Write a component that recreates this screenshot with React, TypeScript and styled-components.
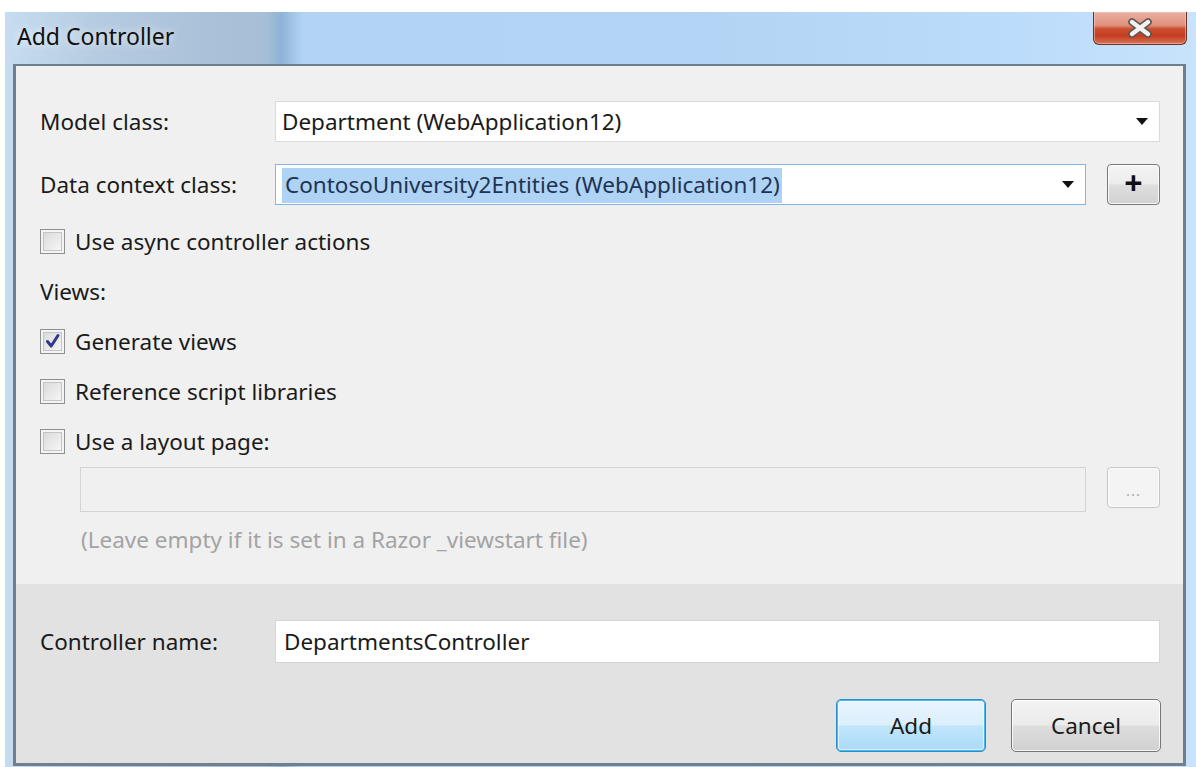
import React from 'react'
import styled, { createGlobalStyle } from 'styled-components'

const GlobalStyle = createGlobalStyle`
  html, body {
    margin: 0;
    padding: 0;
    background: #ffffff;
  }
  body {
    font-family: "Noto Sans", "Open Sans", sans-serif;
  }
`

const CheckMark = () => (
  <svg width="16" height="16" viewBox="0 0 16 16">
    <path d="M2.5 8.5 L6.2 13 L13 2.5" fill="none" stroke="#2e3a8c" strokeWidth="3" strokeLinecap="round" strokeLinejoin="round" />
  </svg>
)

const Arrow = () => (
  <svg width="12" height="7" viewBox="0 0 12 7">
    <path d="M0 0 H12 L6 7 Z" fill="#111" />
  </svg>
)

const CloseGlyph = () => (
  <svg width="28" height="20" viewBox="0 0 28 20">
    <path d="M6 4 L22 16 M22 4 L6 16" stroke="#5d5654" strokeWidth="7.5" strokeLinecap="round" />
    <path d="M6 4 L22 16 M22 4 L6 16" stroke="#f2f2f2" strokeWidth="4.4" strokeLinecap="round" />
  </svg>
)

const Checkbox = ({ checked }: { checked?: boolean }) => (
  <Box>{checked && <CheckMark />}</Box>
)

const App = () => {
  return (
    <Page>
      <GlobalStyle />
      <Window>
        <TitleBar>
          <Title>Add Controller</Title>
          <CloseButton>
            <CloseGlyph />
          </CloseButton>
        </TitleBar>
        <Client>
          <Main>
            <FieldRow>
              <Label>Model class:</Label>
              <Combo>
                <ComboText>Department (WebApplication12)</ComboText>
                <Arrow />
              </Combo>
            </FieldRow>
            <FieldRow $gap={22}>
              <Label>Data context class:</Label>
              <Combo $focused>
                <ComboText>
                  <Selected>ContosoUniversity2Entities (WebApplication12)</Selected>
                </ComboText>
                <Arrow />
              </Combo>
              <SideButton>
                <Plus>+</Plus>
              </SideButton>
            </FieldRow>
            <CheckRow $gap={23}>
              <Checkbox />
              <CheckLabel>Use async controller actions</CheckLabel>
            </CheckRow>
            <SectionLabel>Views:</SectionLabel>
            <CheckRow>
              <Checkbox checked />
              <CheckLabel>Generate views</CheckLabel>
            </CheckRow>
            <CheckRow>
              <Checkbox />
              <CheckLabel>Reference script libraries</CheckLabel>
            </CheckRow>
            <CheckRow>
              <Checkbox />
              <CheckLabel>Use a layout page:</CheckLabel>
            </CheckRow>
            <LayoutRow>
              <DisabledField />
              <SideButton disabled>
                <Dots>...</Dots>
              </SideButton>
            </LayoutRow>
            <Hint>(Leave empty if it is set in a Razor _viewstart file)</Hint>
          </Main>
          <Footer>
            <FieldRow $gap={0}>
              <Label>Controller name:</Label>
              <NameInput>DepartmentsController</NameInput>
            </FieldRow>
            <Buttons>
              <Button $primary>Add</Button>
              <Button>Cancel</Button>
            </Buttons>
          </Footer>
        </Client>
      </Window>
    </Page>
  )
}

export default App

const Page = styled.div`
  width: 1196px;
  height: 767px;
  overflow: hidden;
  padding-top: 12px;
  box-sizing: border-box;
  background: #ffffff;
`

const Window = styled.div`
  margin-left: 5px;
  width: 1191px;
  height: 755px;
  box-sizing: border-box;
  padding: 0 10px 1px 8px;
  display: flex;
  flex-direction: column;
  background: linear-gradient(
    90deg,
    #c6dcf1 0%,
    #b5cbe0 8%,
    #a9c0d8 18%,
    #a6bed6 22%,
    #8eb3d8 23.2%,
    #b2d3f4 25%,
    #b3d4f4 60%,
    #bcdcfb 85%,
    #c8e3fb 100%
  );
`

const TitleBar = styled.div`
  height: 52px;
  flex-shrink: 0;
  display: flex;
  justify-content: space-between;
  align-items: flex-start;
`

const Title = styled.div`
  margin-top: 8px;
  margin-left: 4px;
  font-size: 23px;
  color: #101010;
  text-shadow: 0 0 8px rgba(255, 255, 255, 0.9);
`

const CloseButton = styled.div`
  width: 94px;
  height: 33px;
  margin-right: -1px;
  box-sizing: border-box;
  border: 1px solid #6a3328;
  border-top: none;
  border-radius: 0 0 6px 6px;
  display: flex;
  align-items: center;
  justify-content: center;
  background: linear-gradient(180deg, #eab0a2 0%, #e0907b 42%, #cd4f31 52%, #c43d20 75%, #d9745a 100%);
  box-shadow: inset 0 0 0 1px rgba(255, 210, 200, 0.5);
`

const Client = styled.div`
  flex: 1;
  display: flex;
  flex-direction: column;
  border: 3px solid #6e7f90;
  border-top-width: 2px;
  background: #f0f0f0;
`

const Main = styled.div`
  height: 518px;
  flex-shrink: 0;
  box-sizing: border-box;
  padding: 35px 23px 0 24px;
  display: flex;
  flex-direction: column;
`

const FieldRow = styled.div<{ $gap?: number }>`
  display: flex;
  align-items: center;
  margin-top: ${p => p.$gap ?? 0}px;
`

const Label = styled.div`
  width: 235px;
  flex-shrink: 0;
  font-size: 22.5px;
  color: #1a1a1a;
`

const Combo = styled.div<{ $focused?: boolean }>`
  flex: 1;
  height: 41px;
  box-sizing: border-box;
  display: flex;
  align-items: center;
  padding: 0 11px 0 6px;
  background: #ffffff;
  border: 1px solid ${p => (p.$focused ? '#86b7e4' : '#dadada')};
`

const ComboText = styled.div`
  flex: 1;
  font-size: 22.5px;
  color: #1a1a1a;
  white-space: nowrap;
`

const Selected = styled.span`
  background: #aed3f5;
  color: #1f3452;
  padding: 1px 2px 3px 3px;
`

const SideButton = styled.div<{ disabled?: boolean }>`
  width: 53px;
  height: 41px;
  margin-left: 21px;
  flex-shrink: 0;
  box-sizing: border-box;
  border-radius: 4px;
  display: flex;
  align-items: center;
  justify-content: center;
  border: 1px solid ${p => (p.disabled ? '#c6c6c6' : '#7a7a7a')};
  background: ${p =>
    p.disabled
      ? '#f4f4f4'
      : 'linear-gradient(180deg, #f4f4f4 0%, #ececec 48%, #dedede 52%, #d2d2d2 100%)'};
  box-shadow: inset 0 0 0 1px rgba(255, 255, 255, 0.8);
`

const Plus = styled.span`
  font-size: 32px;
  font-weight: 700;
  line-height: 1;
  color: #111;
  margin-top: -3px;
`

const Dots = styled.span`
  font-size: 15px;
  color: #a8a8b8;
  margin-top: 4px;
  letter-spacing: 1px;
`

const CheckRow = styled.div<{ $gap?: number }>`
  display: flex;
  align-items: center;
  height: 26px;
  margin-top: ${p => p.$gap ?? 24}px;
`

const Box = styled.div`
  width: 25px;
  height: 25px;
  box-sizing: border-box;
  border: 1px solid #8e8f8f;
  display: flex;
  align-items: center;
  justify-content: center;
  background: linear-gradient(135deg, #d6d6d6 0%, #e8e8e8 50%, #fafafa 100%);
  box-shadow: inset 0 0 0 2px #f4f4f4, inset 0 0 0 3px #c4c4c4;
  flex-shrink: 0;
`

const CheckLabel = styled.div`
  margin-left: 10px;
  font-size: 22.5px;
  color: #1a1a1a;
`

const SectionLabel = styled.div`
  height: 26px;
  margin-top: 24px;
  display: flex;
  align-items: center;
  font-size: 22.5px;
  color: #1a1a1a;
`

const LayoutRow = styled.div`
  display: flex;
  margin-top: 13px;
  padding-left: 40px;
`

const DisabledField = styled.div`
  flex: 1;
  height: 45px;
  box-sizing: border-box;
  border: 1px solid #d4d4d4;
  background: #f0f0f0;
`

const Hint = styled.div`
  margin-top: 14px;
  padding-left: 41px;
  height: 26px;
  display: flex;
  align-items: center;
  font-size: 22.5px;
  color: #a3a3a3;
`

const Footer = styled.div`
  flex: 1;
  box-sizing: border-box;
  padding: 36px 22px 0 24px;
  background: #e2e2e2;
  display: flex;
  flex-direction: column;
`

const NameInput = styled.div`
  flex: 1;
  height: 43px;
  margin-right: 1px;
  box-sizing: border-box;
  display: flex;
  align-items: center;
  padding-left: 8px;
  background: #ffffff;
  border: 1px solid #d6d6d6;
  font-size: 22.5px;
  color: #1a1a1a;
`

const Buttons = styled.div`
  display: flex;
  justify-content: flex-end;
  gap: 25px;
  margin-top: 36px;
`

const Button = styled.div<{ $primary?: boolean }>`
  width: 150px;
  height: 53px;
  box-sizing: border-box;
  border-radius: 5px;
  display: flex;
  align-items: center;
  justify-content: center;
  font-size: 22.5px;
  color: #1a1a1a;
  border: 1px solid ${p => (p.$primary ? '#2b8fce' : '#767676')};
  background: ${p =>
    p.$primary
      ? 'linear-gradient(180deg, #e9f5fd 0%, #dbeffc 48%, #c0e5fb 52%, #abdaf8 100%)'
      : 'linear-gradient(180deg, #f3f3f3 0%, #ebebeb 48%, #dddddd 52%, #d0d0d0 100%)'};
  box-shadow: ${p =>
    p.$primary
      ? 'inset 0 0 0 1px #48b6ee, inset 0 0 0 2px rgba(255,255,255,0.6)'
      : 'inset 0 0 0 1px rgba(255,255,255,0.85)'};
`
